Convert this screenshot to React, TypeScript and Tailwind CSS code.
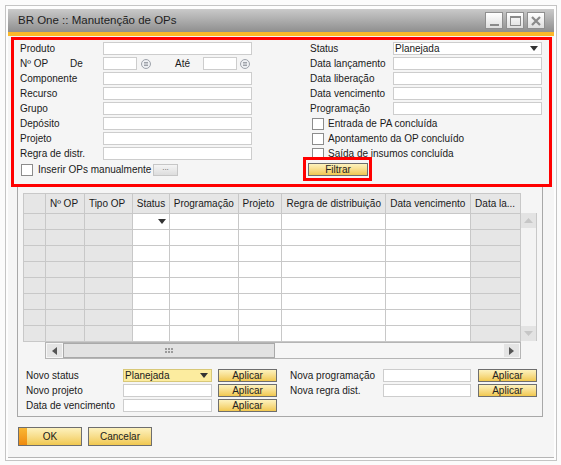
import type { ReactNode } from "react"

const leftFields = ["Componente", "Recurso", "Grupo", "Depósito", "Projeto", "Regra de distr."]
const rightFields = ["Data lançamento", "Data liberação", "Data vencimento", "Programação"]
const checks = ["Entrada de PA concluída", "Apontamento da OP concluído", "Saída de insumos concluída"]

const cols = [
  { w: "w-[22px]", label: "", gray: true },
  { w: "w-[39px]", label: "Nº OP", gray: true },
  { w: "w-[48px]", label: "Tipo OP", gray: true },
  { w: "w-[37px]", label: "Status", gray: false },
  { w: "w-[69px]", label: "Programação", gray: false },
  { w: "w-[44px]", label: "Projeto", gray: false },
  { w: "w-[104px]", label: "Regra de distribuição", gray: false },
  { w: "w-[85px]", label: "Data vencimento", gray: false },
  { w: "w-[50px]", label: "Data la...", gray: true },
]

function Input({ className = "w-[149px]" }: { className?: string }) {
  return <div className={`h-[13px] border border-[#cdcdcd] bg-white ${className}`} />
}

function Arrow() {
  return (
    <svg width="8" height="5" viewBox="0 0 8 5">
      <path d="M0 0h8L4 5z" fill="#333" />
    </svg>
  )
}

function Check() {
  return <div className="h-[12px] w-[12px] shrink-0 border border-[#8c8c8c] bg-white" />
}

function ListIcon() {
  return (
    <svg width="10" height="10" viewBox="0 0 10 10">
      <circle cx="5" cy="5" r="4.5" fill="#eef0f3" stroke="#9ea3ab" />
      <path d="M3 3.5h4M3 5h4M3 6.5h4" stroke="#8a8f97" strokeWidth="0.8" />
    </svg>
  )
}

function Gold({ children, className = "" }: { children: ReactNode; className?: string }) {
  return (
    <div
      className={`flex items-center justify-center border border-[#6e6e6e] bg-linear-to-b from-[#fdf2bd] to-[#f1c84e] text-[10px] leading-none text-[#222] ${className}`}
    >
      {children}
    </div>
  )
}

function Row({ label, children, lw = "w-[83px]" }: { label: string; children: ReactNode; lw?: string }) {
  return (
    <div className="mb-[2px] flex h-[13px] items-center">
      <span className={`${lw} shrink-0 text-[10px] leading-[13px]`}>{label}</span>
      {children}
    </div>
  )
}

function TitleBtn({ children }: { children: ReactNode }) {
  return (
    <div className="flex h-[17px] w-[18px] items-center justify-center border border-[#8f8f8f] bg-linear-to-b from-[#ffffff] to-[#dedede]">
      {children}
    </div>
  )
}

export default function App() {
  return (
    <div className="h-[465px] w-[561px] bg-[#fbfbfb] pl-[5px] pt-[5px] font-['Liberation_Sans',Arial,sans-serif] text-[#1a1a1a]">
      <div className="h-[456px] w-[552px] border border-[#c4c4c4] bg-[#fdfdfd] px-[2px] pb-[2px] pt-[3px]">
        <div className="flex h-full flex-col border-b border-[#b5b5b5]">
          {/* title bar */}
          <div className="flex h-[23px] items-center justify-between bg-linear-to-b from-[#cacaca] to-[#8f8f8f] pl-[10px] pr-[9px]">
            <span className="text-[11.5px] text-[#1e1e1e]">BR One :: Manutenção de OPs</span>
            <div className="flex gap-[3px]">
              <TitleBtn>
                <div className="mt-[9px] h-[2px] w-[9px] bg-[#8a8a8a]" />
              </TitleBtn>
              <TitleBtn>
                <div className="h-[10px] w-[11px] border border-t-2 border-[#8a8a8a]" />
              </TitleBtn>
              <TitleBtn>
                <svg width="10" height="10" viewBox="0 0 10 10">
                  <path d="M1 1l8 8M9 1l-8 8" stroke="#8a8a8a" strokeWidth="2.2" />
                </svg>
              </TitleBtn>
            </div>
          </div>
          <div className="h-[4px] bg-[#fbb829]" />

          <div className="flex flex-1 flex-col bg-[#f5f5f5]">
            {/* filter area */}
            <div className="relative ml-[3px] mr-[2px] mt-[1px] flex h-[150px] border-[3px] border-[#ff0000] pl-[6px] pt-[2px]">
              <div className="flex w-[232px] flex-col">
                <Row label="Produto">
                  <Input />
                </Row>
                <div className="mb-[2px] flex h-[13px] items-center text-[10px]">
                  <span className="w-[50px]">Nº OP</span>
                  <span className="w-[33px]">De</span>
                  <Input className="w-[34px]" />
                  <div className="ml-[4px]">
                    <ListIcon />
                  </div>
                  <span className="ml-[24px] w-[28px]">Até</span>
                  <Input className="w-[34px]" />
                  <div className="ml-[3px]">
                    <ListIcon />
                  </div>
                </div>
                {leftFields.map((f) => (
                  <Row key={f} label={f}>
                    <Input />
                  </Row>
                ))}
                <div className="mt-[1px] flex h-[13px] items-center">
                  <div className="ml-[1px]">
                    <Check />
                  </div>
                  <span className="ml-[5px] w-[115px] text-[10px]">Inserir OPs manualmente</span>
                  <div className="flex h-[12px] w-[25px] items-center justify-center border border-[#c6c6c6] bg-linear-to-b from-[#f4f4f4] to-[#dddddd] pb-[3px] text-[8px] text-[#555]">
                    ...
                  </div>
                </div>
              </div>

              <div className="ml-[58px] flex w-[232px] flex-col">
                <Row label="Status">
                  <div className="flex h-[13px] w-[149px] items-center justify-between border border-[#cdcdcd] bg-white pl-[1px] pr-[3px] text-[10px]">
                    <span>Planejada</span>
                    <Arrow />
                  </div>
                </Row>
                {rightFields.map((f) => (
                  <Row key={f} label={f}>
                    <Input />
                  </Row>
                ))}
                {checks.map((c) => (
                  <div key={c} className="mb-[2px] flex h-[13px] items-center">
                    <div className="ml-[2px]">
                      <Check />
                    </div>
                    <span className="ml-[4px] text-[10px]">{c}</span>
                  </div>
                ))}
                <div className="ml-[-2px] mt-[1px]">
                  <Gold className="h-[13px] w-[60px]">Filtrar</Gold>
                </div>
              </div>

              <div className="absolute left-[289px] top-[117px] h-[24px] w-[69px] border-[3px] border-[#ff0000]" />
            </div>

            {/* grid panel */}
            <div className="ml-[9px] h-[230px] w-[526px] border-x border-b border-[#a8a8a8] pl-[5px] pt-[6px]">
              <div className="flex">
                <div className="w-[498px] border-l border-t border-[#c8c8c8]">
                  <div className="flex h-[20px]">
                    {cols.map((c, i) => (
                      <div
                        key={i}
                        className={`${c.w} ${i === 0 ? "w-[21px]" : ""} flex items-center overflow-hidden whitespace-nowrap border-b border-r border-[#c8c8c8] bg-[#e6e6e6] pl-[4px] text-[10px]`}
                      >
                        {c.label}
                      </div>
                    ))}
                  </div>
                  {Array.from({ length: 8 }).map((_, r) => (
                    <div key={r} className="flex h-[16px]">
                      {cols.map((c, i) => (
                        <div
                          key={i}
                          className={`${c.w} ${i === 0 ? "w-[21px]" : ""} flex items-center justify-end border-b border-r border-[#c8c8c8] pr-[3px] ${c.gray ? "bg-[#e6e6e6]" : "bg-white"}`}
                        >
                          {r === 0 && i === 3 ? <Arrow /> : null}
                        </div>
                      ))}
                    </div>
                  ))}
                </div>
                <div className="flex w-[16px] flex-col pt-[20px]">
                  <div className="flex h-[128px] flex-col justify-between border-r border-[#c8c8c8] bg-[#f3f3f3]">
                    <div className="flex h-[15px] items-center justify-center bg-[#e3e3e3]">
                      <svg width="9" height="5" viewBox="0 0 9 5">
                        <path d="M0 5h9L4.5 0z" fill="#c6c6c6" />
                      </svg>
                    </div>
                    <div className="flex h-[15px] items-center justify-center bg-[#e3e3e3]">
                      <svg width="9" height="5" viewBox="0 0 9 5">
                        <path d="M0 0h9L4.5 5z" fill="#c6c6c6" />
                      </svg>
                    </div>
                  </div>
                </div>
              </div>

              {/* horizontal scrollbar */}
              <div className="ml-[22px] flex h-[17px] w-[476px] items-center border border-[#b5b5b5] bg-[#f6f6f6] px-[1px]">
                <div className="flex h-[13px] w-[15px] items-center justify-center bg-[#e4e4e4]">
                  <svg width="5" height="8" viewBox="0 0 5 8">
                    <path d="M5 0v8L0 4z" fill="#555" />
                  </svg>
                </div>
                <div className="ml-[1px] flex h-[15px] w-[212px] items-center justify-center border border-[#a9a9a9] bg-[#e2e2e2]">
                  <svg width="8" height="5" viewBox="0 0 8 5">
                    <g fill="#9a9a9a">
                      <rect x="0" y="0" width="2" height="2" />
                      <rect x="3" y="0" width="2" height="2" />
                      <rect x="6" y="0" width="2" height="2" />
                      <rect x="0" y="3" width="2" height="2" />
                      <rect x="3" y="3" width="2" height="2" />
                      <rect x="6" y="3" width="2" height="2" />
                    </g>
                  </svg>
                </div>
                <div className="flex-1" />
                <div className="flex h-[13px] w-[15px] items-center justify-center bg-[#e4e4e4]">
                  <svg width="5" height="8" viewBox="0 0 5 8">
                    <path d="M0 0v8L5 4z" fill="#555" />
                  </svg>
                </div>
              </div>

              {/* mass update */}
              <div className="ml-[3px] mt-[10px] flex flex-col text-[10px]">
                <div className="mb-[2px] flex h-[13px] items-center">
                  <span className="w-[97px]">Novo status</span>
                  <div className="flex h-[13px] w-[89px] items-center justify-between border border-[#d8c878] bg-[#fcec9f] pl-[1px] pr-[3px]">
                    <span>Planejada</span>
                    <Arrow />
                  </div>
                  <Gold className="ml-[6px] h-[13px] w-[59px]">Aplicar</Gold>
                  <span className="ml-[13px] w-[93px]">Nova programação</span>
                  <Input className="w-[88px]" />
                  <Gold className="ml-[7px] h-[13px] w-[59px]">Aplicar</Gold>
                </div>
                <div className="mb-[2px] flex h-[13px] items-center">
                  <span className="w-[97px]">Novo projeto</span>
                  <Input className="w-[89px]" />
                  <Gold className="ml-[6px] h-[13px] w-[59px]">Aplicar</Gold>
                  <span className="ml-[13px] w-[93px]">Nova regra dist.</span>
                  <Input className="w-[88px]" />
                  <Gold className="ml-[7px] h-[13px] w-[59px]">Aplicar</Gold>
                </div>
                <div className="flex h-[13px] items-center">
                  <span className="w-[97px]">Data de vencimento</span>
                  <Input className="w-[89px]" />
                  <Gold className="ml-[6px] h-[13px] w-[59px]">Aplicar</Gold>
                </div>
              </div>
            </div>

            {/* bottom buttons */}
            <div className="ml-[10px] mt-[10px] flex gap-[6px]">
              <div className="flex h-[19px] w-[64px] border border-[#6e6e6e]">
                <div className="w-[8px] bg-linear-to-b from-[#f9b733] to-[#ef8a0c]" />
                <div className="flex flex-1 items-center justify-center bg-linear-to-b from-[#fdf2bd] to-[#f1c84e] pr-[8px] text-[10px]">
                  OK
                </div>
              </div>
              <Gold className="h-[19px] w-[64px]">Cancelar</Gold>
            </div>
          </div>
        </div>
      </div>
    </div>
  )
}
